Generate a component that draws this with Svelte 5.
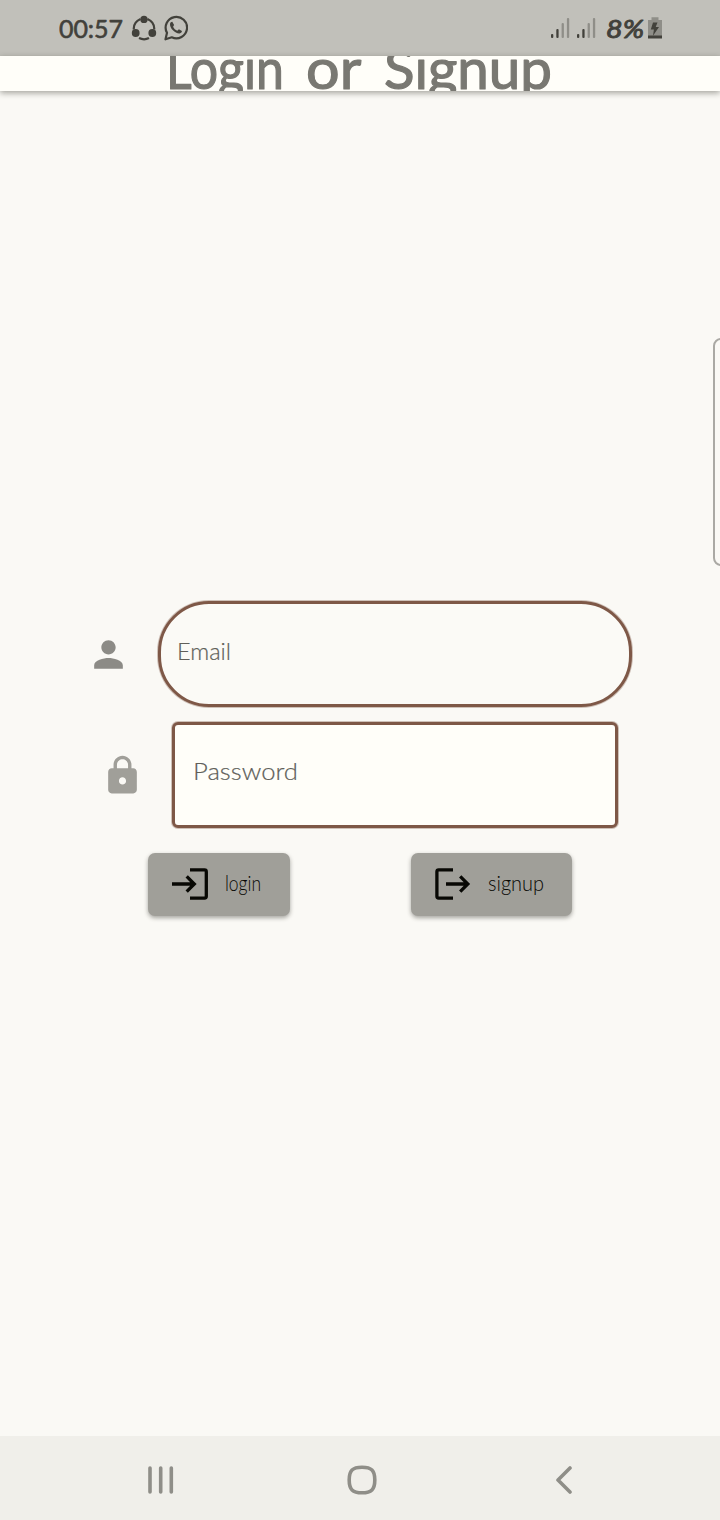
<script>
  const bars = [
    { x: 0, y: 17, h: 4, on: true },
    { x: 5.3, y: 12, h: 9, on: true },
    { x: 10.6, y: 6, h: 15, on: false },
    { x: 15.9, y: 1, h: 20, on: false }
  ];
</script>

{#snippet signal()}
  <svg class="signal" width="19" height="22" viewBox="0 0 19 22">
    {#each bars as b}
      <rect x={b.x} y={b.y} width="2.3" height={b.h} rx="1" fill={b.on ? '#42413b' : '#8f8e88'} />
    {/each}
  </svg>
{/snippet}

<div class="screen">
  <header class="status">
    <svg class="clock" width="66" height="56">
      <text x="0" y="37.500" textLength="64">00:57</text>
    </svg>
    <svg class="share" width="26" height="26" viewBox="0 0 26 26">
      <g fill="none" stroke="#42413b" stroke-width="2.2">
        <path d="M9.500 4C5 6 2.500 10 2.800 14.500M16.500 4c4.500 2 7 6 6.700 10.500M8 23c3.200 1.600 7 1.600 10 0" />
      </g>
      <g fill="#42413b"><circle cx="13" cy="4.400" r="3.700" /><circle cx="4.700" cy="18" r="3.900" /><circle cx="21.300" cy="18" r="3.900" /></g>
    </svg>
    <svg class="chat" width="24" height="26" viewBox="0 0 24 26">
      <path d="M1.500 24.300 3 17.800A10.700 10.700 0 1 1 7.800 22.300Z" fill="none" stroke="#42413b" stroke-width="2.200" stroke-linejoin="round" />
      <path d="M8.300 6.800c-.8-.2-2.100.7-2.300 2.200-.3 4.500 5.500 9.800 9.600 9.400 1.500-.2 2.500-1.400 2.300-2.400l-3-1.800-1.600 1.500c-1.900-.8-3.400-2.200-4.200-4l1-1.800Z" fill="#42413b" />
    </svg>
    <div class="fill"></div>
    {@render signal()}
    <span class="gap"></span>
    {@render signal()}
    <svg class="percent" width="39" height="56">
      <text x="0" y="38" textLength="38" lengthAdjust="spacingAndGlyphs">8%</text>
    </svg>
    <svg class="battery" width="14" height="22" viewBox="0 0 14 22">
      <path d="M0 3h3.500V.3h7V3H14v16H0Z" fill="#8f8e88" />
      <path d="M0 18.500h14v3H0Z" fill="#42413b" />
      <path d="M5 5.500h4.500L7.700 10H11l-6 8.700.9-6.100H2.800Z" fill="#42413b" />
    </svg>
  </header>

  <div class="titlebar">
    <svg width="384" height="35">
      <text y="33"><tspan x="-2" textLength="118" lengthAdjust="spacingAndGlyphs">Login</tspan> <tspan x="138" textLength="54" lengthAdjust="spacingAndGlyphs">or</tspan> <tspan x="216" textLength="168" lengthAdjust="spacingAndGlyphs">Signup</tspan></text>
    </svg>
  </div>

  <main>
    <div class="row email">
      <svg width="43" height="43" viewBox="0 0 24 24" fill="#8c8b86"><path d="M12 12c2.210 0 4-1.790 4-4s-1.790-4-4-4-4 1.790-4 4 1.790 4 4 4zm0 2c-2.670 0-8 1.340-8 4v2h16v-2c0-2.660-5.330-4-8-4z" /></svg>
      <div class="field">
        <svg width="120" height="50"><text x="-1" y="34" textLength="54" lengthAdjust="spacingAndGlyphs">Email</text></svg>
      </div>
    </div>
    <div class="row password">
      <svg width="43" height="43" viewBox="0 0 24 24" fill="#a09f99"><path fill-rule="evenodd" d="M18 8h-1V6c0-2.760-2.240-5-5-5S7 3.240 7 6v2H6c-1.100 0-2 .9-2 2v10c0 1.100.9 2 2 2h12c1.100 0 2-.9 2-2V10c0-1.100-.9-2-2-2zm-6 9c-1.100 0-2-.9-2-2s.9-2 2-2 2 .9 2 2-.9 2-2 2zm3.100-9H8.900V6c0-1.710 1.390-3.100 3.100-3.100 1.710 0 3.100 1.390 3.100 3.100v2z" /></svg>
      <div class="field">
        <svg width="120" height="50"><text x="0" y="33" textLength="105" lengthAdjust="spacingAndGlyphs">Password</text></svg>
      </div>
    </div>
    <div class="actions">
      <button class="login">
        <svg width="36" height="32" viewBox="0 0 36 32" fill="none" stroke="#080804" stroke-width="3.300">
          <path d="M18 1.900h14.500q1.800 0 1.800 1.800v24.600q0 1.800-1.800 1.800H18M0 16h22M14.700 8.400l7.600 7.600-7.600 7.600" />
        </svg>
        <svg class="label" width="37" height="62"><text x="0" y="38" textLength="36" lengthAdjust="spacingAndGlyphs">login</text></svg>
      </button>
      <button class="signup">
        <svg width="36" height="32" viewBox="0 0 36 32" fill="none" stroke="#080804" stroke-width="3.300">
          <path d="M18 1.900H3.700q-1.800 0-1.800 1.800v24.600q0 1.800 1.800 1.800H18M11 16h22M25.200 8.400l7.600 7.600-7.600 7.600" />
        </svg>
        <svg class="label" width="57" height="62"><text x="0" y="38" textLength="56" lengthAdjust="spacingAndGlyphs">signup</text></svg>
      </button>
    </div>
  </main>

  <nav>
    <svg width="26" height="28" viewBox="0 0 26 28"><path d="M2 2v24M12.700 2v24M23.300 2v24" /></svg>
    <svg class="home" width="30" height="30" viewBox="0 0 30 30"><path d="M15 2.200c9.500 0 12.800 3.300 12.800 12.800S24.500 27.800 15 27.800 2.200 24.500 2.200 15 5.500 2.200 15 2.200Z" /></svg>
    <svg width="18" height="28" viewBox="0 0 18 28"><path d="M15 2 3 14l12 12" stroke-width="3" /></svg>
  </nav>

  <div class="edge"></div>
</div>

<style>
  :global(body) { margin: 0; background: #faf9f5; }
  .screen {
    position: relative;
    width: 720px;
    height: 1520px;
    display: flex;
    flex-direction: column;
    overflow: hidden;
    background: #faf9f5;
    font-family: Lato, "Open Sans", sans-serif;
  }
  svg { display: block; flex: none; }
  .status {
    height: 56px;
    flex: none;
    display: flex;
    align-items: center;
    padding: 0 58px 0 59px;
    box-sizing: border-box;
    background: #c1c0ba;
  }
  .status text { font-size: 25px; fill: #42413b; stroke: #42413b; stroke-width: 0.6; stroke-linejoin: round; }
  .clock text { font-size: 25px; }
  .percent text { font-style: italic; stroke-width: 0.9; }
  .share { margin-left: 6px; }
  .chat { margin-left: 7px; }
  .fill { flex: 1; }
  .gap { width: 7px; }
  .signal { margin-top: -1px; }
  .percent { margin-left: 10px; }
  .battery { margin-left: 3px; }
  .titlebar {
    height: 35px;
    flex: none;
    display: flex;
    justify-content: center;
    background: #fffef9;
    box-shadow: 0 2px 6px rgba(30, 30, 20, 0.4);
    z-index: 1;
  }
  .titlebar svg { overflow: hidden; }
  .titlebar text { font-size: 56px; fill: #797872; stroke: #797872; stroke-width: 1.2; stroke-linejoin: round; }
  main { flex: 1; padding: 509px 87px 0; }
  .row { display: flex; align-items: center; gap: 27px; height: 108px; }
  .password { padding: 0 14px; margin-top: 13px; }
  .field {
    flex: 1;
    height: 106px;
    box-sizing: border-box;
    border: 3px solid #7e5847;
    box-shadow: 0 0 0 1px rgba(126, 88, 71, 0.35);
    margin: 0 1px;
    padding: 22px 17px;
  }
  .field text { font-size: 24px; font-weight: 300; fill: #605f59; stroke: #605f59; stroke-width: 0.2; }
  .email .field { border-radius: 51px; background: #fbfaf6; }
  .password .field { border-radius: 6px; background: #fffef9; padding-left: 18px; }
  .actions { display: flex; justify-content: space-between; padding: 0 61px; margin-top: 24px; }
  button {
    display: flex;
    align-items: center;
    height: 63px;
    padding: 0 0 1px 24px;
    border: 0;
    border-radius: 7px;
    background: #a09f99;
    box-shadow: 0 2px 4px rgba(30, 30, 20, 0.38);
    font-family: inherit;
  }
  .login { width: 142px; gap: 17px; }
  .signup { width: 161px; gap: 17px; }
  .label { overflow: visible; }
  .label text { font-size: 21px; font-weight: 300; fill: #080804; }
  nav {
    height: 84px;
    flex: none;
    display: flex;
    align-items: center;
    justify-content: space-between;
    padding: 3px 147px 0;
    padding-left: 148px;
    box-sizing: border-box;
    background: #f0efea;
  }
  nav path { fill: none; stroke: #8f8e88; stroke-width: 3.6; stroke-linecap: round; stroke-linejoin: round; }
  .home { margin-right: 5px; }
  .edge {
    position: absolute;
    left: 713px;
    top: 338px;
    width: 20px;
    height: 228px;
    box-sizing: border-box;
    border: 2px solid #aaa9a4;
    border-radius: 8px;
  }
</style>
